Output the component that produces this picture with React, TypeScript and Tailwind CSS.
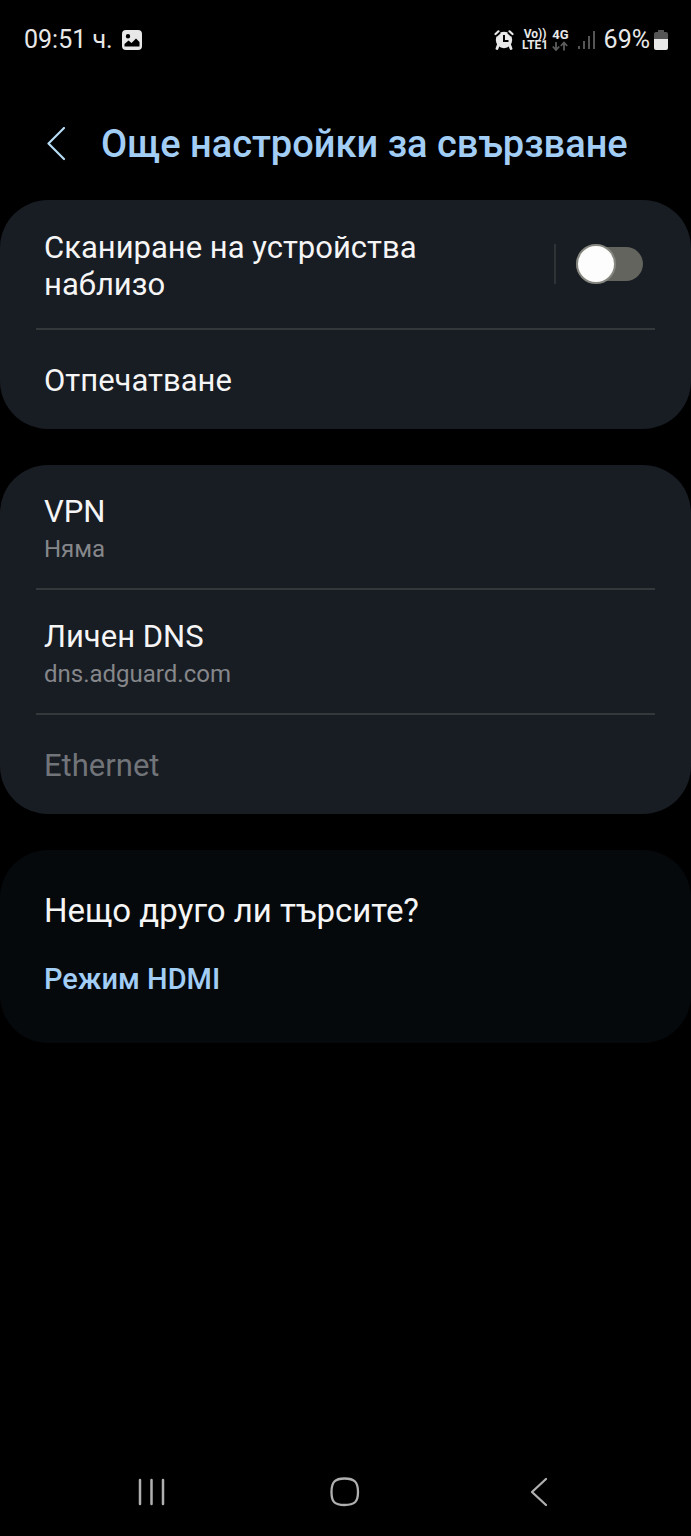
import { useState } from "react";
import type { ReactNode } from "react";

const StatusBar = () => (
  <header className="flex h-20 items-center justify-between pl-6 pr-[23px] text-[#e8e8e8]">
    <div className="flex items-center gap-2">
      <span className="text-[25px] leading-8">09:51 ч.</span>
      <svg width="22" height="20" viewBox="0 0 22 20" aria-hidden="true">
        <path
          fillRule="evenodd"
          fill="currentColor"
          d="M5 0h12a4 4 0 0 1 4 4v12a4 4 0 0 1-4 4H5a4 4 0 0 1-4-4V4a4 4 0 0 1 4-4ZM7 4a2.200 2.200 0 1 0 0 4.400a2.200 2.200 0 0 0 0-4.400ZM3.500 16.500h15v-4.500l-3.500-3.500-4.500 4.500-3-2.500-4 3.500Z"
        />
      </svg>
    </div>

    <div className="flex items-center">
      {/* Alarm */}
      <svg width="20" height="20" viewBox="0 0 20 20" className="mr-2" aria-hidden="true">
        <circle cx="10" cy="10" r="8.200" fill="currentColor" />
        <path d="M1.500 4.800 5 1.500M18.500 4.800 15 1.500" stroke="#000" strokeWidth="5" />
        <path d="M1.500 4 4.500 1.300M18.500 4l-3-2.700" stroke="currentColor" strokeWidth="2.200" strokeLinecap="round" />
        <path d="M4.500 14.500 3 18.500M15.500 14.500l1.500 4" stroke="currentColor" strokeWidth="2.800" strokeLinecap="round" />
        <path d="M10 5v6h4.500" fill="none" stroke="#000" strokeWidth="2" />
      </svg>
      <div className="mr-1 flex flex-col items-center text-[12px] font-bold leading-[11px]">
        <span>Vo))</span>
        <span>LTE1</span>
      </div>
      <div className="mr-2 flex flex-col items-center">
        <span className="text-[13px] font-bold leading-3">4G</span>
        <svg width="16" height="10" viewBox="0 0 16 10" fill="none" stroke="#5c5c5c" strokeWidth="1.800" aria-hidden="true">
          <path d="M4 1v8M.8 5.500 4 9l3.200-3.500M12 9.500v-8M8.800 5 12 1.500 15.200 5" />
        </svg>
      </div>
      {/* Signal strength */}
      <svg width="19" height="20" viewBox="0 0 19 20" className="mr-2" fill="#555" aria-hidden="true">
        <path d="M1 16h2v3H1zM6 11h2v8H6zM11 6h2v13h-2zM16 1h2v18h-2z" />
      </svg>
      <span className="text-[25px] leading-8">69%</span>
      <svg width="14" height="20" viewBox="0 0 14 20" className="ml-1" aria-hidden="true">
        <path d="M4 0h6v2h2a2 2 0 0 1 2 2v5H0V4a2 2 0 0 1 2-2h2Z" fill="#555" />
        <path d="M0 9h14v9a2 2 0 0 1-2 2H2a2 2 0 0 1-2-2Z" fill="currentColor" />
      </svg>
    </div>
  </header>
);

const Card = ({ children }: { children: ReactNode }) => (
  <section className="rounded-[48px] bg-[#181c23] px-9">{children}</section>
);

const Divider = () => <hr className="border-t-2 border-[#33383a]" />;

const Item = ({ title, value, disabled }: { title: string; value?: string; disabled?: boolean }) => (
  <button
    disabled={disabled}
    className={`block w-full px-2 text-left ${value ? "pb-6 pt-7" : "pb-[30px] pt-8"} ${disabled ? "text-[#717479]" : "text-[#f5f5f5]"}`}
  >
    <span className="block text-[31px] leading-[37px]">{title}</span>
    {value && <span className="block pt-1 text-[24px] leading-[30px] text-[#85878a]">{value}</span>}
  </button>
);

const App = () => {
  const [scan, setScan] = useState(false);

  return (
    <div className="flex min-h-screen flex-col bg-black font-[Roboto,sans-serif]">
      <StatusBar />

      <div className="flex h-[120px] items-center pl-[47px] pt-2">
        <button aria-label="Назад" className="mr-9 text-[#b7daf5]">
          <svg width="18" height="34" viewBox="0 0 18 34" fill="none" stroke="currentColor" strokeWidth="2.200" strokeLinecap="round" strokeLinejoin="round">
            <path d="M17 1 1.500 16.500 17 32" />
          </svg>
        </button>
        <h1 className="text-[38px] font-medium leading-[46px] text-[#a2cdf5]">Още настройки за свързване</h1>
      </div>

      <main className="flex flex-col gap-9">
        <Card>
          <div className="flex items-center py-[25px] pl-2 pr-3">
            <label htmlFor="scan" className="mr-auto max-w-[420px] pt-1 text-[31px] leading-[37px] text-[#f5f5f5]">
              Сканиране на устройства наблизо
            </label>
            <div className="mr-5 h-10 w-[2px] bg-[#2e3336]" />
            <div className="relative flex h-10 w-[67px] items-center">
              <input
                id="scan"
                type="checkbox"
                role="switch"
                checked={scan}
                onChange={(e) => setScan(e.target.checked)}
                className="peer h-[34px] w-full appearance-none rounded-full bg-[#63645e] checked:bg-[#3e7bd6]"
              />
              <span className="pointer-events-none absolute left-0 top-0 size-10 rounded-full border-2 border-[#85867f] bg-[#fdfdfd] peer-checked:left-7" />
            </div>
          </div>
          <Divider />
          <Item title="Отпечатване" />
        </Card>

        <Card>
          <Item title="VPN" value="Няма" />
          <Divider />
          <Item title="Личен DNS" value="dns.adguard.com" />
          <Divider />
          <Item title="Ethernet" disabled />
        </Card>

        <section className="rounded-[48px] bg-[#06090c] px-11 pb-[46px] pt-[42px]">
          <h2 className="text-[33px] leading-[37px] text-[#f5f5f5]">Нещо друго ли търсите?</h2>
          <a href="#hdmi" className="mt-8 block text-[29px] font-medium leading-9 text-[#a2cdf5]">
            Режим HDMI
          </a>
        </section>
      </main>

      {/* Navigation bar */}
      <nav className="mt-auto flex h-[88px] items-center justify-around px-[54px] text-[#b0b0b0]">
        <button aria-label="Скорошни">
          <svg width="28" height="28" viewBox="0 0 28 28" stroke="currentColor" strokeWidth="2.500" strokeLinecap="round">
            <path d="M3 2v24M14.500 2v24M26 2v24" />
          </svg>
        </button>
        <button aria-label="Начало">
          <svg width="30" height="30" viewBox="0 0 30 30" fill="none" stroke="currentColor" strokeWidth="2.300">
            <path d="M14.500 1.500C24.500 1.500 28 5 28 15s-3.500 13-13.500 13S1.500 25 1.500 15 5 1.500 14.500 1.500Z" />
          </svg>
        </button>
        <button aria-label="Назад">
          <svg width="28" height="30" viewBox="0 0 28 30" fill="none" stroke="currentColor" strokeWidth="2.300" strokeLinecap="round" strokeLinejoin="round">
            <path d="M20 2 6 15l14 13" />
          </svg>
        </button>
      </nav>
    </div>
  );
};

export default App;
